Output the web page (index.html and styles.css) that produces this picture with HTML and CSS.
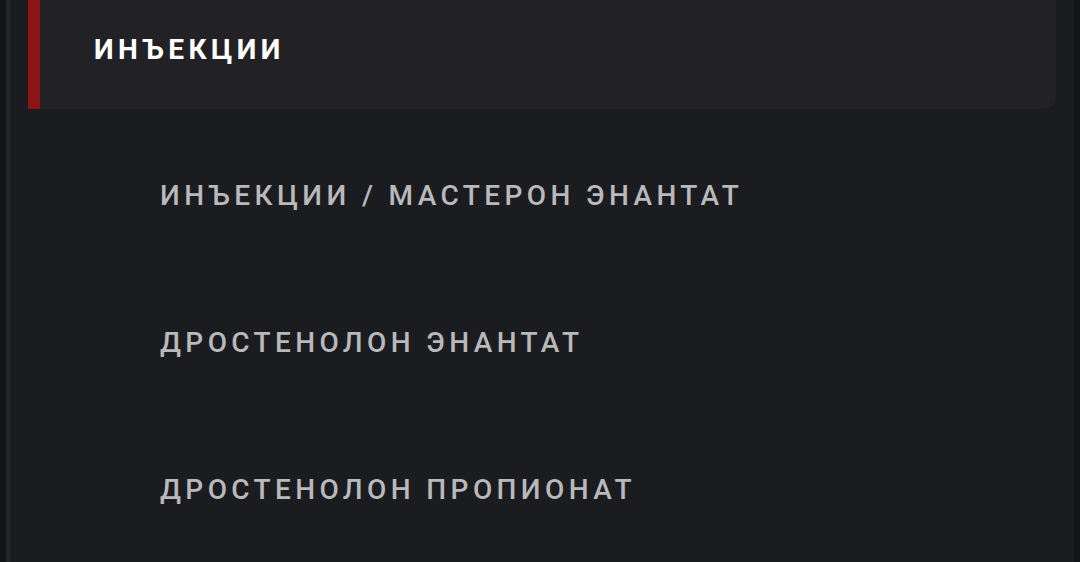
FILE: index.html
```html
<!DOCTYPE html>
<html lang="ru">
<head>
  <meta charset="UTF-8" />
  <meta name="viewport" content="width=device-width, initial-scale=1.0"/>
  <title>Инъекции</title>
  <link rel="stylesheet" href="styles.css">
</head>
<body>
  <div class="panel">
    <div class="menu">
      <div class="menu-head">
        <span class="menu-title">Инъекции</span>
      </div>
      <ul class="submenu">
        <li><a href="#">Инъекции / Мастерон энантат</a></li>
        <li><a href="#">Дростенолон энантат</a></li>
        <li><a href="#">Дростенолон пропионат</a></li>
      </ul>
    </div>
  </div>
</body>
</html>
```

FILE: styles.css
```css
body {
  margin: 0;
  background-color: #131418;
  font-family: Roboto, "Noto Sans", sans-serif;
  height: 100vh;
  overflow: hidden;
}

.panel {
  margin: 0 6px;
  height: 100%;
  background-color: #1b1c20;
  border-left: 4px solid #25262a;
  box-sizing: border-box;
}

.menu {
  padding: 0 18px;
}

.menu-head {
  height: 109px;
  display: flex;
  align-items: center;
  background-color: #222126;
  border-left: 12px solid #8e1515;
  border-radius: 0 0 12px 0;
  padding-left: 54px;
  padding-bottom: 10px;
  box-sizing: border-box;
}

.menu-title {
  color: #ffffff;
  font-size: 28px;
  font-weight: 700;
  letter-spacing: 4.45px;
  text-transform: uppercase;
}

.submenu {
  list-style: none;
  margin: 0;
  padding: 13px 0 0 132px;
}

.submenu li {
  height: 147px;
  display: flex;
  align-items: center;
}

.submenu a {
  color: #b9b9bc;
  text-decoration: none;
  font-size: 28px;
  font-weight: 500;
  letter-spacing: 4.4px;
  text-transform: uppercase;
}
```
